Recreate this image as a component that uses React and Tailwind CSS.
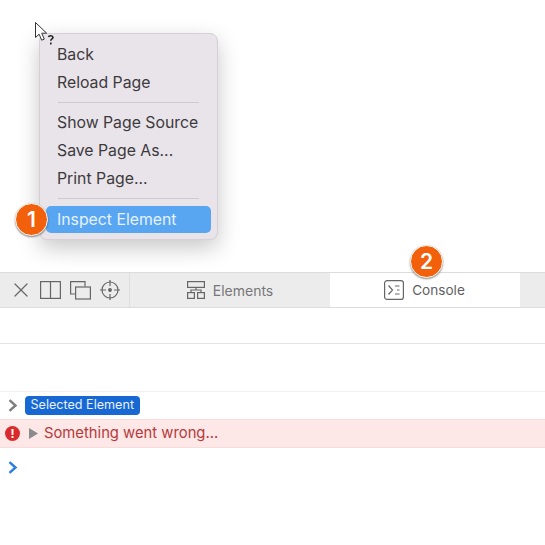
import { X } from "lucide-react";

function Badge({ n, className }) {
  return (
    <div className={"absolute flex h-[33px] w-[33px] items-center justify-center rounded-full border-[1.5px] border-white bg-[#f2600c] text-[21px] font-semibold text-white shadow-[0_1px_2px_rgba(0,0,0,0.45)] " + className}>
      {n}
    </div>
  );
}

function MenuItem({ children }) {
  return <div className="flex h-[28px] items-center pl-[17px] text-[#3d3a3e]">{children}</div>;
}

function ContextMenu() {
  return (
    <div className="relative h-[207px] w-[179px] rounded-[8px] border border-[#d6d0d6] bg-[#e9e4e9] pt-[7px] text-[15.8px] shadow-[0_8px_22px_rgba(0,0,0,0.22)]">
      <MenuItem>Back</MenuItem>
      <MenuItem>Reload Page</MenuItem>
      <div className="mx-[18px] mb-[6px] mt-[5px] h-px bg-[#cfcacf]" />
      <MenuItem>Show Page Source</MenuItem>
      <MenuItem>Save Page As...</MenuItem>
      <MenuItem>Print Page...</MenuItem>
      <div className="mx-[18px] mb-[7px] mt-[5px] h-px bg-[#cfcacf]" />
      <div className="mx-[6px] flex h-[27px] items-center rounded-[5px] bg-[#58a5f2] pl-[11px] text-[#e6f1fc]">
        Inspect Element
      </div>
    </div>
  );
}

function Cursor() {
  return (
    <svg className="absolute left-[34px] top-[21px]" width="24" height="26" viewBox="0 0 24 26" fill="none">
      <path d="M1.5 1.5v15l3.6-3.3 2.6 6 2.6-1.1-2.6-5.900h5z" fill="#fff" stroke="#333" strokeWidth="1" />
      <path d="M14.500 16c.3-1.800 4.300-1.800 4.500.3.1 1.600-2.300 1.600-2.200 3.400M16.800 21.500v2" stroke="#222" strokeWidth="1.600" />
    </svg>
  );
}

function ToolIcons() {
  return (
    <div className="flex h-full w-[130px] shrink-0 items-center border-r border-[#dedede] pl-[9px] text-[#666]">
      <X size={24} strokeWidth={1.200} className="mr-[7px]" />
      <svg width="21" height="18" viewBox="0 0 21 18" fill="none" stroke="currentColor" strokeWidth="1.200" className="mr-[9px]">
        <rect x="0.600" y="0.600" width="19.800" height="16.800" />
        <path d="M10.500 0.600v16.800" />
      </svg>
      <svg width="21" height="19" viewBox="0 0 21 19" fill="none" stroke="currentColor" strokeWidth="1.200" className="mr-[9px]">
        <path d="M5.500 13H.6V.6h14.400v5" />
        <rect x="5.600" y="6" width="14.800" height="12" />
      </svg>
      <svg width="20" height="20" viewBox="0 0 20 20" fill="none" stroke="currentColor" strokeWidth="1.200">
        <circle cx="10" cy="10" r="8" />
        <circle cx="10" cy="10" r="1.300" fill="currentColor" />
        <path d="M10 0v6M10 14v6M0 10h6M14 10h6" />
      </svg>
    </div>
  );
}

function Toolbar() {
  return (
    <div className="relative flex h-[36px] border-y border-[#dcdcdc] bg-[#ececec]">
      <ToolIcons />
      <div className="flex w-[200px] items-center justify-center gap-[8px] text-[14px] text-[#77777a]">
        <svg width="18" height="18" viewBox="0 0 18 18" fill="none" stroke="#666" strokeWidth="1.200">
          <rect x="0.600" y="0.600" width="16.800" height="5.800" />
          <rect x="0.600" y="11.600" width="6.800" height="5.800" />
          <rect x="10.600" y="11.600" width="6.800" height="5.800" />
          <path d="M9 6.400v2.600M4 11.600V9h10v2.600" />
        </svg>
        Elements
      </div>
      <div className="flex w-[190px] items-center justify-center gap-[8px] bg-white pr-[1px] text-[13.600px] text-[#5f5f62]">
        <svg width="20" height="20" viewBox="0 0 20 20" fill="none" stroke="#666" strokeWidth="1.200">
          <rect x="0.600" y="0.600" width="18.800" height="18.800" rx="2.500" />
          <path d="M4.500 5.500l4 4.500-4 4.500M11 6h4.500M13 10h2.500M11 14h4.500" />
        </svg>
        Console
      </div>
      <Badge n="2" className="left-[410px] -top-[28px]" />
    </div>
  );
}

function ConsoleRows() {
  return (
    <div className="text-[14px]">
      <div className="h-[36px] border-b border-[#e4e4e4]" />
      <div className="h-[48px] border-b border-[#efefef]" />
      <div className="flex h-[27px] items-center gap-[6px] pl-[8px]">
        <svg width="11" height="13" viewBox="0 0 11 13" fill="none" stroke="#7d7d7d" strokeWidth="2.400">
          <path d="M1.500 1.200L7.500 6.500 1.500 11.800" />
        </svg>
        <span className="flex h-[19px] items-center rounded-[4px] bg-[#1768d2] px-[5.500px] text-[12.600px] leading-none text-[#e8f1fc]">
          Selected Element
        </span>
      </div>
      <div className="flex h-[29px] items-center border-y border-[#f8dcdc] bg-[#fde7e7] pl-[5px] text-[#b73a3c]">
        <div className="flex h-[15px] w-[15px] items-center justify-center rounded-full bg-[#d92b2b] text-[12px] font-bold leading-none text-white">!</div>
        <svg width="10" height="11" viewBox="0 0 10 11" className="ml-[9px] mr-[5px]">
          <path d="M0 0l9 5.500-9 5.500z" fill="#8b8b8b" />
        </svg>
        <span className="text-[14.800px]">Something went wrong...</span>
      </div>
      <div className="flex h-[38px] items-center pl-[8px]">
        <svg width="11" height="13" viewBox="0 0 11 13" fill="none" stroke="#2a7de1" strokeWidth="2.400">
          <path d="M1.500 1.200L7.500 6.500 1.500 11.800" />
        </svg>
      </div>
    </div>
  );
}

export default function App() {
  return (
    <div className="relative h-[545px] w-[545px] overflow-hidden bg-white font-['Inter','Liberation_Sans',sans-serif]">
      <div className="h-[272px] pl-[39px] pt-[33px]">
        <ContextMenu />
      </div>
      <Cursor />
      <Badge n="1" className="left-[15px] top-[203px]" />
      <Toolbar />
      <ConsoleRows />
    </div>
  );
}
